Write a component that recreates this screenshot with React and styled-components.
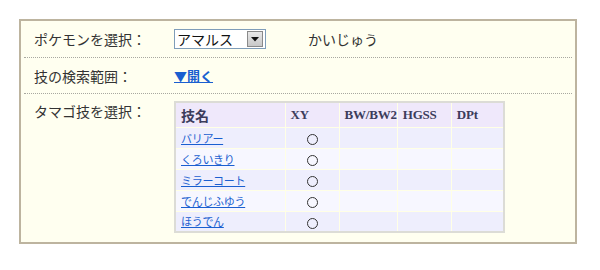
import React from "react";
import styled, { createGlobalStyle } from "styled-components";

const Global = createGlobalStyle`
  html, body { margin: 0; padding: 0; background: #ffffff; }
  body { font-family: "Noto Sans CJK JP", "Noto Sans", sans-serif; }
`;

const Page = styled.div`
  padding: 19px 0 0 19px;
`;

const Box = styled.div`
  height: 221px;
  border: 2px solid #bdb49f;
  background: #fffff0;
  padding: 0 3px;
  box-sizing: content-box;
  width: 548px;
`;

const Row = styled.div`
  display: flex;
  align-items: ${(p) => (p.$top ? "flex-start" : "center")};
  height: ${(p) => p.$h}px;
  border-bottom: ${(p) => (p.$last ? "none" : "1px dotted #a8a8a0")};
  padding-top: ${(p) => (p.$top ? 7 : 0)}px;
  box-sizing: border-box;
`;

const Label = styled.div`
  width: 140px;
  flex-shrink: 0;
  padding-left: 10px;
  font-size: 14px;
  color: #333333;
  line-height: ${(p) => (p.$top ? "20px" : "normal")};
`;

const Value = styled.div`
  display: flex;
  align-items: center;
`;

const SelectBox = styled.div`
  display: flex;
  align-items: center;
  width: 90px;
  height: 18px;
  border: 1px solid #7f9db9;
  background: #fff;
  box-sizing: content-box;
`;

const SelectText = styled.span`
  flex: 1;
  font-size: 14px;
  color: #111;
  padding-left: 2px;
  line-height: 18px;
`;

const SelectBtn = styled.span`
  width: 14px;
  height: 14px;
  margin-right: 2px;
  background: linear-gradient(#e8e8e8, #c8c8c8);
  border: 1px solid #8a8a8a;
  display: flex;
  align-items: center;
  justify-content: center;
`;

const Kind = styled.span`
  margin-left: 42px;
  font-size: 14px;
  color: #333;
`;

const OpenLink = styled.a`
  font-size: 13px;
  font-weight: bold;
  color: #1a5fd0;
  text-decoration: underline;
  cursor: pointer;
`;

const Table = styled.table`
  border-collapse: collapse;
  border: 2px solid #dcdcd6;
  font-size: 12px;
  table-layout: fixed;
`;

const Th = styled.th`
  background: #efe8fb;
  border: 1px solid #ffffe6;
  height: 25px;
  padding: 0 0 0 5px;
  text-align: left;
  font-family: "Liberation Serif", "Noto Sans CJK JP", serif;
  font-weight: bold;
  font-size: 13px;
  letter-spacing: -0.2px;
  color: #3c3c5c;
  width: ${(p) => p.$w}px;
  box-sizing: border-box;
  white-space: nowrap;
  overflow: hidden;
`;

const ThJa = styled(Th)`
  font-family: "Noto Sans CJK JP", sans-serif;
  font-size: 14px;
  letter-spacing: 0;
`;

const Td = styled.td`
  background: ${(p) => (p.$even ? "#f7f7ff" : "#eeeefd")};
  border: 1px solid #ffffe6;
  height: 21px;
  padding: 0 0 0 5px;
  text-align: ${(p) => (p.$center ? "center" : "left")};
  box-sizing: border-box;
  font-size: 11px;
`;

const MoveLink = styled.a`
  color: #1a5fd0;
  text-decoration: underline;
  cursor: pointer;
  font-size: 11px;
  letter-spacing: -0.3px;
`;

const Circle = styled.span`
  display: inline-block;
  width: 9px;
  height: 9px;
  border: 1px solid #333;
  border-radius: 50%;
  margin-left: -5px;
  vertical-align: middle;
`;

const moves = ["バリアー", "くろいきり", "ミラーコート", "でんじふゆう", "ほうでん"];

export default function App() {
  return (
    <>
      <Global />
      <Page>
        <Box>
          <Row $h={37}>
            <Label>ポケモンを選択：</Label>
            <Value>
              <SelectBox>
                <SelectText>アマルス</SelectText>
                <SelectBtn>
                  <svg width="8" height="5" viewBox="0 0 8 5">
                    <path d="M0 0 L8 0 L4 4.5 Z" fill="#111" />
                  </svg>
                </SelectBtn>
              </SelectBox>
              <Kind>かいじゅう</Kind>
            </Value>
          </Row>
          <Row $h={36}>
            <Label>技の検索範囲：</Label>
            <Value>
              <OpenLink>▼開く</OpenLink>
            </Value>
          </Row>
          <Row $h={148} $top $last>
            <Label $top>タマゴ技を選択：</Label>
            <Table>
              <thead>
                <tr>
                  <ThJa $w={110}>技名</ThJa>
                  <Th $w={54}>XY</Th>
                  <Th $w={58}>BW/BW2</Th>
                  <Th $w={54}>HGSS</Th>
                  <Th $w={53}>DPt</Th>
                </tr>
              </thead>
              <tbody>
                {moves.map((m, i) => (
                  <tr key={m}>
                    <Td $even={i % 2 === 1}>
                      <MoveLink>{m}</MoveLink>
                    </Td>
                    <Td $even={i % 2 === 1} $center>
                      <Circle />
                    </Td>
                    <Td $even={i % 2 === 1} />
                    <Td $even={i % 2 === 1} />
                    <Td $even={i % 2 === 1} />
                  </tr>
                ))}
              </tbody>
            </Table>
          </Row>
        </Box>
      </Page>
    </>
  );
}
